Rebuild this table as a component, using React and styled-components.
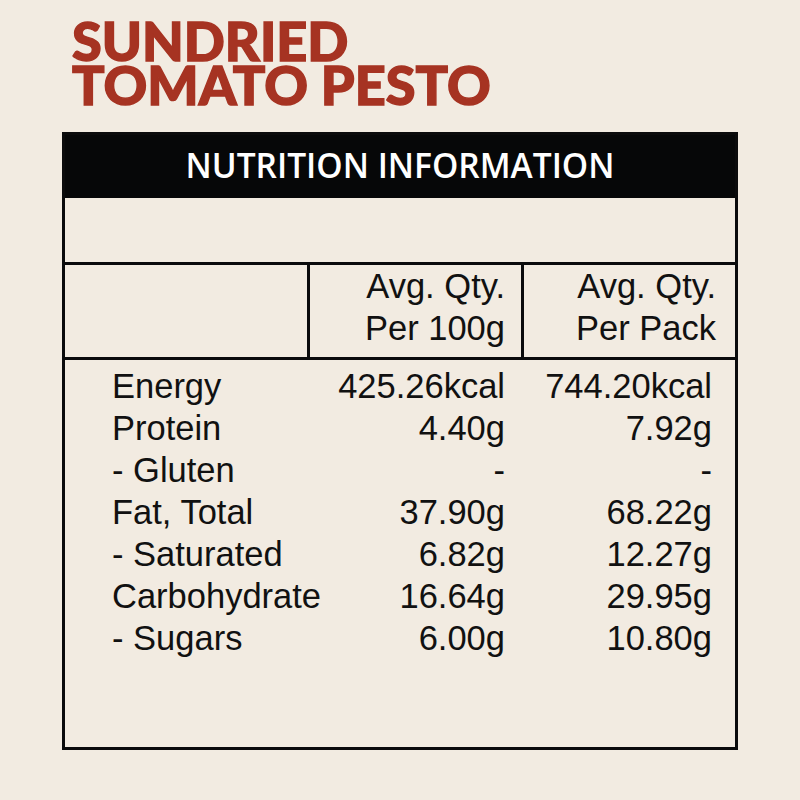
import styled, { createGlobalStyle } from "styled-components";

const GlobalStyle = createGlobalStyle`
  body {
    margin: 0;
    background: #f2ebe1;
  }
`;

const Page = styled.div`
  width: 800px;
  height: 800px;
  box-sizing: border-box;
  padding: 19px 62px 0;
  background: #f2ebe1;
`;

const Title = styled.h1`
  margin: 0 0 25px 10px;
  font-family: Lato, "Open Sans", sans-serif;
  font-weight: 900;
  font-size: 54px;
  line-height: 44px;
  color: #a63322;
  -webkit-text-stroke: 1.4px #a63322;
  text-transform: uppercase;
`;

const Panel = styled.div`
  height: 618px;
  box-sizing: border-box;
  border: 3px solid #0b0b0c;
  display: flex;
  flex-direction: column;
`;

const Banner = styled.div`
  height: 63px;
  box-sizing: border-box;
  padding-bottom: 3px;
  background: #060708;
  color: #ffffff;
  display: flex;
  align-items: center;
  justify-content: center;
  font-family: "Open Sans", sans-serif;
  font-weight: 600;
  font-size: 33.5px;
`;

const Spacer = styled.div`
  height: 64px;
  border-bottom: 3px solid #0b0b0c;
`;

const Grid = styled.div`
  display: grid;
  grid-template-columns: 245px 214px 211px;
  font-family: "Liberation Sans", Arial, sans-serif;
  font-size: 34.5px;
  line-height: 42px;
  color: #111111;
`;

const HeadRow = styled(Grid)`
  height: 95px;
  box-sizing: border-box;
  border-bottom: 3px solid #0b0b0c;
`;

const HeadCell = styled.div`
  border-right: ${(p) => (p.$last ? "none" : "3px solid #0b0b0c")};
  padding-right: ${(p) => p.$pr}px;
  text-align: right;
`;

const Body = styled.div`
  padding-top: 5px;
`;

const Label = styled.div`
  padding-left: 47px;
  white-space: nowrap;
`;

const Value = styled.div`
  padding-right: ${(p) => p.$pr}px;
  text-align: right;
  white-space: nowrap;
`;

const rows = [
  ["Energy", "425.26kcal", "744.20kcal"],
  ["Protein", "4.40g", "7.92g"],
  ["- Gluten", "-", "-"],
  ["Fat, Total", "37.90g", "68.22g"],
  ["- Saturated", "6.82g", "12.27g"],
  ["Carbohydrate", "16.64g", "29.95g"],
  ["- Sugars", "6.00g", "10.80g"],
];

export default function App() {
  return (
    <Page>
      <GlobalStyle />
      <Title>
        Sundried
        <br />
        Tomato Pesto
      </Title>
      <Panel>
        <Banner>NUTRITION INFORMATION</Banner>
        <Spacer />
        <HeadRow>
          <HeadCell $pr={0} />
          <HeadCell $pr={16}>
            Avg. Qty.
            <br />
            Per 100g
          </HeadCell>
          <HeadCell $pr={19} $last>
            Avg. Qty.
            <br />
            Per Pack
          </HeadCell>
        </HeadRow>
        <Body>
          {rows.map(([name, per100, perPack]) => (
            <Grid key={name}>
              <Label>{name}</Label>
              <Value $pr={19}>{per100}</Value>
              <Value $pr={23}>{perPack}</Value>
            </Grid>
          ))}
        </Body>
      </Panel>
    </Page>
  );
}
